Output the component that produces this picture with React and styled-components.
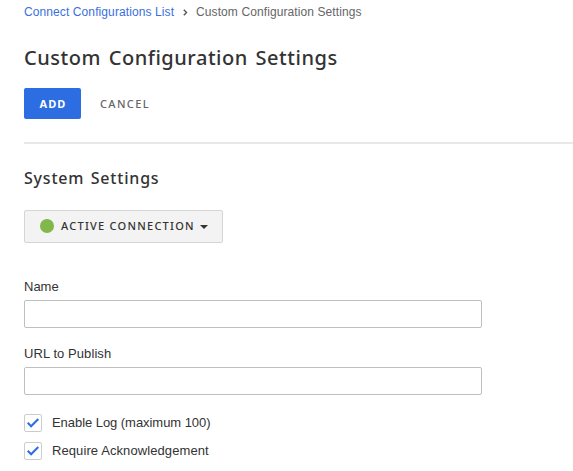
import React from "react";
import styled, { createGlobalStyle } from "styled-components";

const heading = '"Noto Sans", sans-serif';

const GlobalStyle = createGlobalStyle`
  * { box-sizing: border-box; }
  body {
    margin: 0;
    background: #fff;
    color: #333;
    font: 13px/20px "Liberation Sans", Arial, sans-serif;
    overflow: hidden;
  }
`;

const Page = styled.main`
  display: flex;
  flex-direction: column;
  height: 471px;
  padding: 2px 0 0 24px;
  overflow: hidden;
`;

const Breadcrumbs = styled.nav`
  display: flex;
  align-items: center;
  height: 20px;
  color: #666;
  font-size: 12px;
  letter-spacing: 0.1px;
  white-space: nowrap;
`;

const CrumbLink = styled.a`
  width: 150px;
  color: #3a6fe0;
  text-decoration: none;
`;

const CrumbArrow = styled.svg`
  width: 5px;
  height: 7px;
  margin: 1px 8px 0 9px;
`;

const Title = styled.h1`
  margin: 22px 0 0;
  height: 28px;
  font: 500 20px/27px ${heading};
  letter-spacing: 0.53px;
  word-spacing: 2px;
  white-space: nowrap;
`;

const Actions = styled.div`
  display: flex;
  height: 31px;
  margin-top: 16px;
`;

const Button = styled.button`
  width: ${(p) => (p.$primary ? "57px" : "87px")};
  padding: 0 0 0 1px;
  border: 0;
  border-radius: 2px;
  background: ${(p) => (p.$primary ? "#2c6de2" : "transparent")};
  color: ${(p) => (p.$primary ? "#fff" : "#666")};
  font: ${(p) => (p.$primary ? 700 : 500)} 11px/31px ${heading};
  letter-spacing: ${(p) => (p.$primary ? "1.1px" : "1.4px")};
`;

const Divider = styled.hr`
  width: 100%;
  height: 2px;
  margin: 23px 0 0;
  border: 0;
  background: #e8e8e8;
  flex: none;
`;

const SectionTitle = styled.h2`
  margin: 22px 0 0;
  height: 24px;
  font: 500 16px/24px ${heading};
  letter-spacing: 0.8px;
  word-spacing: 1.5px;
  white-space: nowrap;
`;

const StatusButton = styled.button`
  display: flex;
  align-items: center;
  width: 199px;
  height: 33px;
  margin-top: 20px;
  padding: 0 0 0 15px;
  border: 1px solid #d5d5d5;
  border-radius: 2px;
  background: #f3f3f3;
  color: #333;
  font: 500 11px/29px ${heading};
  letter-spacing: 1.25px;
  white-space: nowrap;
`;

const StatusDot = styled.span`
  width: 14px;
  height: 14px;
  margin: 0 7px 1px 0;
  border-radius: 50%;
  background: #82b74b;
`;

const StatusText = styled.span`
  width: 139px;
  height: 31px;
  text-align: left;
`;

const Caret = styled.span`
  margin-top: 1px;
  border: 4px solid transparent;
  border-top-color: #333;
  border-bottom: 0;
`;

const Fields = styled.div`
  display: flex;
  flex-direction: column;
  gap: 16px;
  margin-top: 34px;
`;

const Field = styled.label`
  display: flex;
  flex-direction: column;
  gap: 3px;
  width: 458px;
`;

const Input = styled.input`
  height: 28px;
  padding: 0 8px;
  border: 1px solid #bfbfbf;
  border-radius: 2px;
  background: #fff;
`;

const FieldLabel = styled.span`
  letter-spacing: ${(p) => p.$spacing || "0"};
`;

const Options = styled.div`
  display: flex;
  flex-direction: column;
  gap: 10px;
  margin-top: 19px;
`;

const Option = styled.label`
  display: flex;
  align-items: center;
  gap: 10px;
  height: 18px;
  letter-spacing: ${(p) => p.$spacing};
  white-space: nowrap;
`;

const CheckBox = styled.span`
  display: grid;
  place-items: center;
  width: 18px;
  height: 18px;
  border: 1px solid #ccc;
  border-radius: 2px;
`;

const Check = () => (
  <svg width="12" height="10" viewBox="0 0 12 10" fill="none" aria-hidden="true">
    <path d="M.7 4.8 4.1 8.2 11.3 1" stroke="#2c6de2" strokeWidth="2.1" />
  </svg>
);

export default function App() {
  return (
    <>
      <GlobalStyle />
      <Page>
        <Breadcrumbs>
          <CrumbLink>Connect Configurations List</CrumbLink>
          <CrumbArrow viewBox="0 0 5 7" fill="none">
            <path d="M.8.8 3.5 3.5.8 6.2" stroke="#555" strokeWidth="1.4" />
          </CrumbArrow>
          <span>Custom Configuration Settings</span>
        </Breadcrumbs>
        <Title>Custom Configuration Settings</Title>
        <Actions>
          <Button $primary>ADD</Button>
          <Button>CANCEL</Button>
        </Actions>
        <Divider />
        <SectionTitle>System Settings</SectionTitle>
        <StatusButton>
          <StatusDot />
          <StatusText>ACTIVE CONNECTION</StatusText>
          <Caret />
        </StatusButton>
        <Fields>
          <Field>
            <FieldLabel>Name</FieldLabel>
            <Input />
          </Field>
          <Field>
            <FieldLabel $spacing="0.07px">URL to Publish</FieldLabel>
            <Input />
          </Field>
        </Fields>
        <Options>
          <Option $spacing="-0.05px">
            <CheckBox><Check /></CheckBox>
            Enable Log (maximum 100)
          </Option>
          <Option $spacing="0.09px">
            <CheckBox><Check /></CheckBox>
            Require Acknowledgement
          </Option>
        </Options>
      </Page>
    </>
  );
}
